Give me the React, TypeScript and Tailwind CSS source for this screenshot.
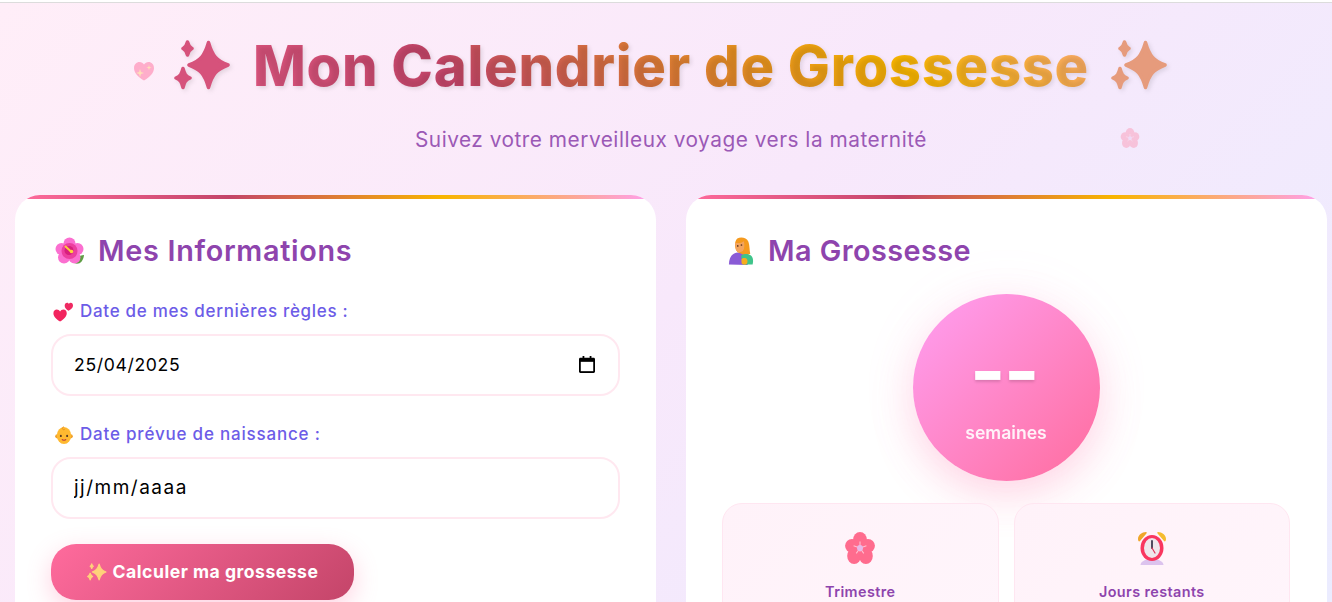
import React from 'react';

const star = (cx: number, cy: number, rx: number, ry: number) =>
  `M${cx} ${cy - ry}C${cx + rx * 0.2} ${cy - ry * 0.4} ${cx + rx * 0.4} ${cy - ry * 0.2} ${cx + rx} ${cy}` +
  `C${cx + rx * 0.4} ${cy + ry * 0.2} ${cx + rx * 0.2} ${cy + ry * 0.4} ${cx} ${cy + ry}` +
  `C${cx - rx * 0.2} ${cy + ry * 0.4} ${cx - rx * 0.4} ${cy + ry * 0.2} ${cx - rx} ${cy}` +
  `C${cx - rx * 0.4} ${cy - ry * 0.2} ${cx - rx * 0.2} ${cy - ry * 0.4} ${cx} ${cy - ry}Z`;

const Sparkles = ({ color, className }: { color: string; className?: string }) => (
  <svg viewBox="0 0 57 50" className={className} fill={color} stroke={color} strokeWidth="3.500" strokeLinejoin="round">
    <path d={star(34.500, 25, 19.500, 22.500)} />
    <path d={star(13.500, 8.500, 4.500, 6.500)} />
    <path d={star(9, 38, 7, 9.500)} />
  </svg>
);

const Hibiscus = () => (
  <svg viewBox="0 0 30 28" className="w-[30px] h-[28px]">
    <path d="M21 21c3-2 6-3 8-3-.3 4-2.500 8-5.500 8.500C21 27 19 26 17 24z" fill="#5f9e45" />
    <g fill="#fb6fd0">
      <circle cx="14.500" cy="6.500" r="6" />
      <circle cx="6.500" cy="12" r="6" />
      <circle cx="9" cy="20.500" r="6" />
      <circle cx="19.500" cy="20.500" r="6" />
      <circle cx="22.500" cy="12" r="6" />
    </g>
    <circle cx="14.500" cy="14" r="8" fill="#ec3f9f" />
    <circle cx="14" cy="13.500" r="4.500" fill="#d81f7e" />
    <path d="M10.500 9.500l5 4.500" stroke="#ffc83d" strokeWidth="2" strokeLinecap="round" />
    <circle cx="16.500" cy="14.500" r="1.800" fill="#ffd23d" />
  </svg>
);

const Feeding = () => (
  <svg viewBox="0 0 28 30" className="w-[26px] h-[28px]">
    <path d="M1 29.500c0-7 3-12 9-13l8 1 6 3-3 9.500z" fill="#8a5bd6" />
    <path d="M10 1.500C14 -.5 20 .5 22 5c1.500 4 1 9 2 13l-5 2-7-3C7 15 6 5 10 1.500z" fill="#f59a1e" />
    <path d="M7.500 6c3 1 7 .5 9.500-1.500 1 3 1 8-1 10.500-2 2-6 1.500-7.500-1z" fill="#f3a45e" />
    <circle cx="10.500" cy="9.500" r=".9" fill="#5a3320" />
    <circle cx="14.500" cy="8.500" r=".9" fill="#5a3320" />
    <path d="M14 20c3-2.500 8-2.500 11 0 2 2 2.500 5 1.500 9.500H16z" fill="#3fc48a" />
    <path d="M14.500 24c1-2 5-2 6 0 1 2 .5 5-1 5.500-2 .5-5 0-5-2.500z" fill="#f5ad1e" />
  </svg>
);

const Hearts = () => (
  <svg viewBox="0 0 24 24" className="w-[20px] h-[20px]">
    <path d="M8.500 23.500C4 20.500 .500 17.500 .500 13.500.500 10.500 2.500 9 4.500 9c1.800 0 3.200 1 4 2.500C9.300 10 10.700 9 12.500 9c2.500 0 4 2 4 4.500 0 4-3.500 7-8 10z" fill="#f2255f" />
    <path d="M18.500 10.500c-2.500-1.800-4.500-3.500-4.500-6C14 2.500 15.300 1 17 1c.8 0 1.800.5 2 1.500C19.500 1.500 20.300 1 21.300 1 23 1 24 2.500 24 4.500c0 2.500-2.500 4.200-5.500 6z" fill="#ef2a62" />
  </svg>
);

const Baby = () => (
  <svg viewBox="0 0 20 22" className="w-[18px] h-[20px]">
    <circle cx="2.500" cy="12.500" r="2.300" fill="#f0a02c" />
    <circle cx="17.500" cy="12.500" r="2.300" fill="#f0a02c" />
    <ellipse cx="10" cy="11.500" rx="8" ry="9.500" fill="#ffb930" />
    <path d="M10 2c-2 0-2.500 2-1 3 1 .500 2 0 2-1" stroke="#e8901c" strokeWidth="1" fill="none" />
    <ellipse cx="6.500" cy="12" rx="1.100" ry="1.300" fill="#5a3a25" />
    <ellipse cx="13.500" cy="12" rx="1.100" ry="1.300" fill="#5a3a25" />
    <path d="M8 16c1.200 1 2.800 1 4 0" stroke="#c2453c" strokeWidth="1.200" fill="none" strokeLinecap="round" />
  </svg>
);

const Blossom = ({ className }: { className?: string }) => (
  <svg viewBox="0 0 28 30" className={className}>
    <g fill="#ff6c8e">
      <ellipse cx="14" cy="7.500" rx="6.500" ry="7.500" />
      <ellipse cx="6.500" cy="13" rx="6.500" ry="6.500" />
      <ellipse cx="21.500" cy="13" rx="6.500" ry="6.500" />
      <ellipse cx="8.500" cy="22.500" rx="6.500" ry="7.500" />
      <ellipse cx="19.500" cy="22.500" rx="6.500" ry="7.500" />
    </g>
    <path d="M14 15V9M14 15l6-2M14 15l-6-2M14 15l-3.500 5M14 15l3.500 5" stroke="#ffc0d0" strokeWidth="1" />
    <circle cx="14" cy="15" r="2.800" fill="#e6b8e8" />
  </svg>
);

const AlarmClock = () => (
  <svg viewBox="0 0 30 34" className="w-[30px] h-[34px]">
    <path d="M1 8c0-4 4-7 8-7 1 0 1 1 0 2L3 10c-1 1-2 0-2-2z" fill="#f0a62a" />
    <path d="M29 8c0-4-4-7-8-7-1 0-1 1 0 2l6 7c1 1 2 0 2-2z" fill="#f5bc2f" />
    <path d="M3.500 34c0-3 4-6 11.500-6s11.500 3 11.500 6z" fill="#dcc3ee" />
    <ellipse cx="15" cy="17" rx="11.500" ry="13" fill="#f9365f" />
    <ellipse cx="15" cy="17" rx="8" ry="10" fill="#efe6ec" />
    <path d="M15 10v7" stroke="#3d3a50" strokeWidth="1.800" strokeLinecap="round" />
    <path d="M15 17l3 5" stroke="#e0345a" strokeWidth="1.200" strokeLinecap="round" />
  </svg>
);

const Heart = ({ className }: { className?: string }) => (
  <svg viewBox="0 0 20 19" className={className}>
    <path d="M10 18.500C4 15 0 11 0 6 0 2.500 2.500 0 5.500 0 7.500 0 9 1 10 2.500 11 1 12.500 0 14.500 0 17.500 0 20 2.500 20 6c0 5-4 9-10 12.500z" fill="#ff6f9e" />
    <path d="M5 12l1 3 1-3 3-1-3-1-1-3-1 3-3 1z" fill="#ffd27a" />
    <path d="M15 3l.600 2 2 .600-2 .600-.600 2-.600-2-2-.600 2-.600z" fill="#ffd27a" />
  </svg>
);

const CalendarIcon = () => (
  <svg viewBox="0 0 18 19" className="w-[16px] h-[17px]" fill="none">
    <path d="M4 0h2v2h6V0h2v2h2.500c.800 0 1.500.700 1.500 1.500v14c0 .800-.700 1.500-1.500 1.500h-15C.700 19 0 18.300 0 17.500v-14C0 2.700.700 2 1.500 2H4z" fill="#000" />
    <rect x="2" y="6.500" width="14" height="10.500" fill="#fff" />
  </svg>
);

const DateField = ({ value }: { value: string }) => (
  <div className="relative">
    <input
      type="text"
      readOnly
      value={value}
      className={`block w-full h-[62px] rounded-[20px] border-2 border-[#ffe8f0] bg-white pl-[21px] pr-[40px] pb-[2px] text-black outline-none ${
        value === 'jj/mm/aaaa' ? 'text-[19px] tracking-[1.500px]' : 'text-[17.600px] tracking-[0.650px]'
      }`}
    />
    {value !== 'jj/mm/aaaa' && (
      <div className="absolute right-[25px] top-[22px]">
        <CalendarIcon />
      </div>
    )}
  </div>
);

const Stat = ({ icon, label }: { icon: React.ReactNode; label: string }) => (
  <div className="rounded-[20px] border border-[#ffe6f1] bg-[linear-gradient(135deg,#fff2f9,#fff5fb)] h-[140px] flex flex-col items-center pt-[27px]">
    <div className="h-[34px] flex items-center">{icon}</div>
    <div className="mt-[16px] text-[14.400px] leading-[22px] font-semibold tracking-[0.4px] text-[#8e44ad]">{label}</div>
  </div>
);

export default function App() {
  return (
    <div className="h-screen overflow-hidden bg-white pt-[2px] font-['Inter',sans-serif]">
      <div className="h-full border-t border-[#dcdcdc] bg-[linear-gradient(135deg,#ffeef8_0%,#f8e8fb_50%,#ebecff_100%)] pl-[15px]">
        <div className="relative w-[1312px]">
          <Heart className="absolute left-[119px] top-[59px] w-[20px] h-[19px] opacity-50" />
          <Blossom className="absolute left-[1105px] top-[125px] w-[20px] h-[20px] opacity-30" />

          <header className="pt-[24px] h-[192px]">
            <h1 className="flex items-center justify-center gap-[22px] h-[78px] text-[56px] font-extrabold tracking-[0.75px] bg-[linear-gradient(45deg,#ff6b9d,#c44569,#f8b500,#ff9ff3)] bg-clip-text text-transparent [text-shadow:2px_2px_4px_rgba(0,0,0,0.1)]">
              <Sparkles color="#d6527b" className="w-[57px] h-[50px] -translate-y-[1px] drop-shadow-[2px_2px_2px_rgba(0,0,0,0.1)]" />
              <span>Mon Calendrier de Grossesse</span>
              <Sparkles color="#e69b7c" className="w-[57px] h-[50px] -translate-y-[1px] drop-shadow-[2px_2px_2px_rgba(0,0,0,0.1)]" />
            </h1>
            <p className="mt-[20px] text-center text-[20.800px] leading-[30px] text-[#9b59b6] tracking-[0.52px]">
              Suivez votre merveilleux voyage vers la maternité
            </p>
          </header>

          <main className="grid grid-cols-2 gap-[30px]">
            <section className="relative overflow-hidden rounded-[25px] bg-white h-[700px] px-[36px] pt-[36px]">
              <div className="absolute inset-x-0 top-0 h-[4px] bg-[linear-gradient(90deg,#ff6b9d,#c44569,#f8b500,#ff9ff3)]" />
              <h2 className="flex items-center gap-[13px] h-[40px] text-[28.800px] font-semibold tracking-[0.7px] text-[#8e44ad]">
                <span className="ml-[4px]"><Hibiscus /></span>
                <span>Mes Informations</span>
              </h2>
              <label className="mt-[29px] flex items-center gap-[7px] h-[24px] text-[17px] font-medium text-[#6c5ce7] tracking-[0.7px]">
                <span className="ml-[2px]"><Hearts /></span>
                Date de mes dernières règles :
              </label>
              <div className="mt-[10px]"><DateField value="25/04/2025" /></div>
              <label className="mt-[27px] flex items-center gap-[7px] h-[24px] text-[17px] font-medium text-[#6c5ce7] tracking-[0.8px]">
                <span className="ml-[4px]"><Baby /></span>
                Date prévue de naissance :
              </label>
              <div className="mt-[10px]"><DateField value="jj/mm/aaaa" /></div>
              <button className="mt-[25px] flex items-center justify-center gap-[6px] w-[303px] h-[56px] rounded-[25px] bg-[linear-gradient(135deg,#ff6b9d,#c44569)] text-[17.600px] font-bold tracking-[0.5px] text-white shadow-[0_8px_25px_rgba(255,107,157,0.3)]">
                <Sparkles color="#ffd27a" className="w-[20px] h-[18px]" />
                Calculer ma grossesse
              </button>
            </section>

            <section className="relative overflow-hidden rounded-[25px] bg-white h-[700px] pl-[36px] pr-[37px] pt-[36px]">
              <div className="absolute inset-x-0 top-0 h-[4px] bg-[linear-gradient(90deg,#ff6b9d,#c44569,#f8b500,#ff9ff3)]" />
              <h2 className="flex items-center gap-[14px] h-[40px] text-[28.800px] font-semibold tracking-[0.45px] text-[#8e44ad]">
                <span className="ml-[6px]"><Feeding /></span>
                <span>Ma Grossesse</span>
              </h2>
              <div className="mt-[23px] mx-auto w-[187px] h-[187px] rounded-full bg-gradient-to-br from-[#ff9ff3] to-[#ff6b9d] shadow-[0_15px_40px_rgba(255,107,157,0.25),0_0_60px_rgba(255,159,243,0.08)] flex flex-col items-center text-white">
                <div className="mt-[40px] mr-[4px] h-[72px] text-[76px] leading-[72px] font-bold tracking-[-1.600px] [text-shadow:0_2px_3px_rgba(0,0,0,0.15)]">--</div>
                <div className="mt-[15px] text-[17.600px] leading-[24px] font-semibold opacity-90">semaines</div>
              </div>
              <div className="mt-[22px] grid grid-cols-2 gap-[15px]">
                <Stat icon={<Blossom className="w-[32px] h-[32px]" />} label="Trimestre" />
                <Stat icon={<AlarmClock />} label="Jours restants" />
              </div>
            </section>
          </main>
        </div>
      </div>
    </div>
  );
}
